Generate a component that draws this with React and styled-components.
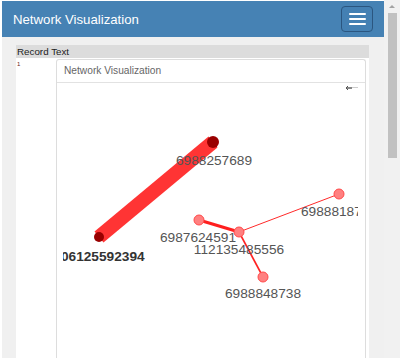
import React from "react";
import styled, { createGlobalStyle } from "styled-components";

const GlobalStyle = createGlobalStyle`
  html, body {
    margin: 0;
    padding: 0;
    background: #fff;
    overflow: hidden;
  }
  body {
    font-family: "Liberation Sans", Arial, sans-serif;
  }
`;

const Page = styled.div`
  display: flex;
  height: 358px;
  width: 400px;
`;

const Main = styled.div`
  flex: 1;
  display: flex;
  flex-direction: column;
  padding: 1px 0 0 2px;
  min-width: 0;
`;

const NavBar = styled.header`
  height: 36px;
  flex-shrink: 0;
  background: #4682b4;
  display: flex;
  align-items: center;
  justify-content: space-between;
  padding: 0 11px;
`;

const Brand = styled.span`
  color: #fff;
  font-size: 13.2px;
`;

const MenuButton = styled.button`
  width: 32px;
  height: 26px;
  box-sizing: border-box;
  padding: 0;
  background: #4480b3;
  border: 1.5px solid #2b5680;
  border-radius: 4px;
  display: flex;
  flex-direction: column;
  align-items: center;
  justify-content: center;
  gap: 3px;
`;

const Bar = styled.span`
  display: block;
  width: 17px;
  height: 2px;
  background: #fff;
  border-radius: 1px;
`;

const Content = styled.main`
  flex: 1;
  background: #f0f0f0;
  padding: 8px 15px 0 14px;
  overflow: hidden;
`;

const Table = styled.div`
  background: #fff;
  height: 100%;
  display: flex;
  flex-direction: column;
`;

const HeadRow = styled.div`
  height: 13px;
  background: #dcdcdc;
  color: #222;
  font-size: 9.8px;
  line-height: 13px;
  padding-left: 1px;
`;

const Row = styled.div`
  flex: 1;
  display: flex;
  padding-top: 1px;
`;

const IndexCell = styled.div`
  width: 39px;
  flex-shrink: 0;
  font-size: 6px;
  color: #6b1c1c;
  padding: 2px 0 0 1px;
`;

const Panel = styled.section`
  flex: 1;
  margin-right: 4px;
  border: 1px solid #ddd;
  border-bottom: none;
  border-radius: 3px 3px 0 0;
  background: #fff;
  display: flex;
  flex-direction: column;
`;

const PanelHeading = styled.div`
  height: 22px;
  border-bottom: 1px solid #e2e2e2;
  color: #666;
  font-size: 10.2px;
  line-height: 22px;
  padding-left: 7px;
`;

const PanelBody = styled.div`
  flex: 1;
  padding: 1px 7px 0 6px;
`;

const Canvas = styled.div`
  height: 100%;
  overflow: hidden;
`;

const Scrollbar = styled.div`
  width: 16px;
  background: #f1f1f1;
  display: flex;
  flex-direction: column;
  align-items: center;
`;

const ArrowUp = styled.div`
  height: 12px;
  display: flex;
  align-items: center;
  justify-content: center;
  &::before {
    content: "";
    border-left: 3px solid transparent;
    border-right: 3px solid transparent;
    border-bottom: 3px solid #a3a3a3;
  }
`;

const Thumb = styled.div`
  width: 9px;
  height: 145px;
  margin-top: 1px;
  background: #c1c1c1;
`;

const edges = [
  { x1: 98, y1: 237, x2: 212, y2: 142, w: 14, c: "#ff3434" },
  { x1: 198, y1: 220, x2: 238, y2: 232, w: 3, c: "#ff1f1f" },
  { x1: 238, y1: 232, x2: 338, y2: 194, w: 1, c: "#ff2a2a" },
  { x1: 238, y1: 232, x2: 262, y2: 277, w: 1.6, c: "#ff2222" },
];

const smallNodes = [
  [198, 220],
  [238, 232],
  [338, 194],
  [262, 277],
];

const labels = [
  { x: 213, y: 165, t: "6988257689" },
  { x: 197, y: 242, t: "6987624591" },
  { x: 238, y: 254, t: "112135485556" },
  { x: 262, y: 298, t: "6988848738" },
  { x: 338, y: 216, t: "6988818752" },
];

const Graph = () => (
  <svg width="295" height="280" style={{ display: "block" }}>
    <g transform="translate(-62,-84)" fontFamily="'Liberation Sans', Arial, sans-serif">
      <path d="M345 88 h6" stroke="#555" strokeWidth="1.4" />
      <path d="M347 86 l-2 2 l2 2" stroke="#555" strokeWidth="1" fill="none" />
      <path d="M351 87.5 h6" stroke="#ccc" strokeWidth="1" />
      {edges.map((e, i) => (
        <line key={i} x1={e.x1} y1={e.y1} x2={e.x2} y2={e.y2} stroke={e.c} strokeWidth={e.w} />
      ))}
      <circle cx="212" cy="142" r="6" fill="#990000" />
      <circle cx="98" cy="237" r="5" fill="#990000" />
      {smallNodes.map(([x, y], i) => (
        <circle key={i} cx={x} cy={y} r="5" fill="#ff8080" stroke="#ff4a4a" strokeWidth="1" />
      ))}
      {labels.map((l, i) => (
        <text key={i} x={l.x} y={l.y} textAnchor="middle" fontSize="13.7" fill="#555">
          {l.t}
        </text>
      ))}
      <text x="98" y="261" textAnchor="middle" fontSize="13.7" fontWeight="bold" fill="#333">
        906125592394
      </text>
    </g>
  </svg>
);

export default function App() {
  return (
    <>
      <GlobalStyle />
      <Page>
        <Main>
          <NavBar>
            <Brand>Network Visualization</Brand>
            <MenuButton aria-label="menu">
              <Bar />
              <Bar />
              <Bar />
            </MenuButton>
          </NavBar>
          <Content>
            <Table>
              <HeadRow>Record Text</HeadRow>
              <Row>
                <IndexCell>1</IndexCell>
                <Panel>
                  <PanelHeading>Network Visualization</PanelHeading>
                  <PanelBody>
                    <Canvas>
                      <Graph />
                    </Canvas>
                  </PanelBody>
                </Panel>
              </Row>
            </Table>
          </Content>
        </Main>
        <Scrollbar>
          <ArrowUp />
          <Thumb />
        </Scrollbar>
      </Page>
    </>
  );
}
